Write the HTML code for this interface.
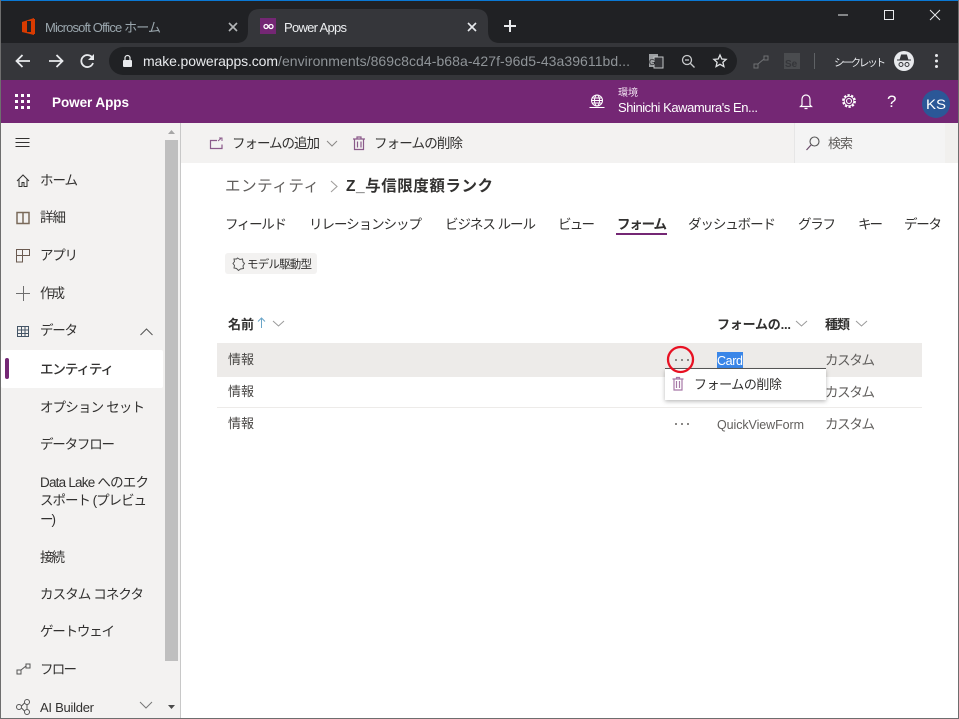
<!DOCTYPE html>
<html lang="ja"><head><meta charset="utf-8"><title>Power Apps</title>
<style>
html,body{margin:0;padding:0;background:#fff;overflow:hidden}
svg{display:block}
text{font-family:"Liberation Sans","Noto Sans CJK JP",sans-serif;white-space:pre}
.n{font-size:13.5px;fill:#323130}
.i{fill:none;stroke:#323130;stroke-width:1}
.p{fill:none;stroke:#8a5a8a;stroke-width:1.2}
</style></head><body>
<svg width="959" height="719" viewBox="0 0 959 719" xmlns="http://www.w3.org/2000/svg">
<defs><filter id="sh" x="-10%" y="-20%" width="120%" height="150%"><feDropShadow dx="0" dy="1.500" stdDeviation="2" flood-color="#000" flood-opacity=".28"/></filter></defs>
<rect width="959" height="719" fill="#fff"/>
<!-- chrome -->
<rect width="959" height="43" fill="#202124"/>
<rect width="959" height="1" fill="#0a78d4"/>
<path d="M0 43H248V21Q248 9 260 9H476Q488 9 488 21V31Q488 43 500 43H959V80H0Z" fill="#35363a"/>
<path d="M236 43Q248 43 248 31V43Z" fill="#35363a"/>
<!-- office icon -->
<path d="M22 22L34 18V35L22 32Z" fill="#d83b01"/><rect x="27" y="21" width="7" height="11" fill="#202124"/><path d="M31 19h4v15h-4z" fill="#d83b01"/>
<text x="45" y="32" font-size="13" fill="#9aa6ad" textLength="116" lengthAdjust="spacing">Microsoft Office ホーム</text>
<path d="M229 23l8 8M237 23l-8 8" stroke="#b4b6b8" stroke-width="1.6"/>
<rect x="260" y="18" width="16" height="16" fill="#742774"/>
<circle cx="266" cy="26.500" r="2" fill="none" stroke="#fff" stroke-width="1.300"/><circle cx="271" cy="26.500" r="2" fill="none" stroke="#fff" stroke-width="1.300"/>
<text x="284" y="32" font-size="13" fill="#eef0f2" textLength="63" lengthAdjust="spacing">Power Apps</text>
<path d="M468 23l8 8M476 23l-8 8" stroke="#e8eaed" stroke-width="1.600"/>
<path d="M510 20v12M504 26h12" stroke="#e8eaed" stroke-width="2"/>
<path d="M838 15h10" stroke="#e8eaed" stroke-width="1"/>
<rect x="884.500" y="10.500" width="9" height="9" fill="none" stroke="#e8eaed" stroke-width="1"/>
<path d="M930 10l10 10M940 10l-10 10" stroke="#e8eaed" stroke-width="1"/>
<!-- toolbar -->
<path d="M30 61H17M22.500 55L16.500 61L22.500 67" fill="none" stroke="#e8eaed" stroke-width="1.800"/>
<path d="M49 61H62M56.500 55L62.500 61L56.500 67" fill="none" stroke="#e8eaed" stroke-width="1.800"/>
<path d="M92.500 58A6 6 0 1 0 93 63" fill="none" stroke="#e8eaed" stroke-width="1.800"/><path d="M94 54v6h-6z" fill="#e8eaed"/>
<rect x="109" y="47" width="628" height="28" rx="14" fill="#202124"/>
<rect x="123" y="60" width="9" height="7" rx="1" fill="#e8eaed"/><path d="M125 60v-2a2.500 2.500 0 0 1 5 0v2" fill="none" stroke="#e8eaed" stroke-width="1.200"/>
<text x="143" y="66" font-size="14" fill="#e8eaed" textLength="135" lengthAdjust="spacing">make.powerapps.com</text>
<text x="278" y="66" font-size="14" fill="#8f9498" textLength="352" lengthAdjust="spacing">/environments/869c8cd4-b68a-427f-96d5-43a39611bd...</text>
<rect x="649" y="54" width="9" height="13" fill="#9da0a3"/><rect x="654" y="57" width="9" height="11" fill="#35363a" stroke="#c4c6c8"/><text x="649" y="65" font-size="8" fill="#202124">G</text>
<circle cx="687" cy="60" r="4.500" fill="none" stroke="#c8cacc" stroke-width="1.300"/><path d="M690.500 63.500l4 4M685 60h4" stroke="#c8cacc" stroke-width="1.300"/>
<path d="M720 55l1.800 4 4.300.400-3.200 2.900 1 4.300-3.900-2.300-3.900 2.300 1-4.300-3.200-2.900 4.300-.400z" fill="none" stroke="#e0e2e4" stroke-width="1.300"/>
<rect x="754" y="64" width="4" height="4" fill="none" stroke="#6e7073"/><rect x="764" y="56" width="4" height="4" fill="none" stroke="#6e7073"/><path d="M758 64l6-5" stroke="#6e7073"/>
<rect x="784" y="53" width="16" height="16" fill="#4a4c4f"/><text x="785" y="67" font-size="10" font-weight="bold" fill="#35363a">Se</text>
<rect x="814" y="53" width="1" height="16" fill="#5f6265"/>
<text x="834" y="66" font-size="10.500" fill="#e8eaed" textLength="52" lengthAdjust="spacing">シークレット</text>
<circle cx="904" cy="61" r="10" fill="#e8eaed"/><path d="M897 60h14M900 60l1.500-5h5l1.500 5" fill="#35363a" stroke="#35363a"/><circle cx="901" cy="64.500" r="2" fill="none" stroke="#35363a"/><circle cx="907" cy="64.500" r="2" fill="none" stroke="#35363a"/>
<circle cx="936.500" cy="55.500" r="1.500" fill="#e8eaed"/><circle cx="936.500" cy="61" r="1.500" fill="#e8eaed"/><circle cx="936.500" cy="66.500" r="1.500" fill="#e8eaed"/>
<!-- app bar -->
<rect y="80" width="959" height="43" fill="#742774"/>
<g fill="#fff"><rect x="15" y="94" width="3" height="3"/><rect x="21" y="94" width="3" height="3"/><rect x="27" y="94" width="3" height="3"/><rect x="15" y="100" width="3" height="3"/><rect x="21" y="100" width="3" height="3"/><rect x="27" y="100" width="3" height="3"/><rect x="15" y="106" width="3" height="3"/><rect x="21" y="106" width="3" height="3"/><rect x="27" y="106" width="3" height="3"/></g>
<text x="52" y="107" font-size="13.500" font-weight="bold" fill="#fff" textLength="77" lengthAdjust="spacing">Power Apps</text>
<g fill="none" stroke="#fff"><circle cx="597" cy="100.500" r="5.500"/><ellipse cx="597" cy="100.500" rx="2.500" ry="5.500"/><path d="M591.500 100.500h11M592 98h10M592 103h10M589.500 107.500h15"/></g>
<text x="618" y="96" font-size="10" fill="#f0e0f0" textLength="20" lengthAdjust="spacing">環境</text>
<text x="618" y="112" font-size="13" fill="#fff" textLength="140" lengthAdjust="spacing">Shinichi Kawamura's En...</text>
<path d="M802 105v-6a4 4 0 0 1 8 0v6l1.500 1.500h-11zM804.500 108.500h3" fill="none" stroke="#fff" stroke-width="1.200"/>
<circle cx="849" cy="101" r="2.500" fill="none" stroke="#fff" stroke-width="1.100"/><circle cx="849" cy="101" r="5.700" fill="none" stroke="#fff" stroke-width="2.400" stroke-dasharray="2.200 1.400"/><circle cx="849" cy="101" r="4.800" fill="none" stroke="#fff" stroke-width=".9"/>
<text x="887" y="107" font-size="17" fill="#fff">?</text>
<circle cx="936" cy="104" r="14" fill="#2b5797"/>
<text x="926" y="109" font-size="14" fill="#fff" textLength="20" lengthAdjust="spacingAndGlyphs">KS</text>
<!-- sidebar -->
<rect y="123" width="180" height="596" fill="#f3f2f1"/>
<rect x="180" y="123" width="1" height="596" fill="#c8c8c8"/>
<rect x="165" y="140" width="13" height="521" fill="#bfbfbf"/>
<path d="M168 134l3.500-4 3.500 4z" fill="#a6a6a6"/>
<path d="M168 705l3.500 4 3.500-4z" fill="#4a4a4a"/>
<path d="M15.500 138.500h14M15.500 142.500h14M15.500 146.500h14" stroke="#323130" stroke-width="1"/>
<path d="M17 181l6-6 6 6M19 179.500v7h3v-4h2v4h3v-7" class="i"/>
<text class="n" x="40" y="185" textLength="38" lengthAdjust="spacing">ホーム</text>
<path d="M17 212.500h12v11H17zM23 212.500v11" fill="none" stroke="#7a6a5a" stroke-width="1.500"/>
<text class="n" x="40" y="222" textLength="26" lengthAdjust="spacing">詳細</text>
<path d="M16.500 249.500h13v6h-13zM16.500 255.500v6.500h6v-12.500" fill="none" stroke="#6a5a50" stroke-width="1"/>
<text class="n" x="40" y="260" textLength="38" lengthAdjust="spacing">アプリ</text>
<path d="M16 293.500h14M23.500 286v15" stroke="#6e6e6e" stroke-width="1"/>
<text class="n" x="40" y="298" textLength="25" lengthAdjust="spacing">作成</text>
<path d="M17.500 326.500h11v10h-11zM17.500 330h11M17.500 333.500h11M21.500 326.500v10M25 326.500v10" fill="none" stroke="#445566" stroke-width="1"/>
<text class="n" x="40" y="335" textLength="38" lengthAdjust="spacing">データ</text>
<path d="M140.500 335l6-6 6 6" fill="none" stroke="#555"/>
<rect x="1" y="350" width="162" height="38" rx="2" fill="#fff"/>
<rect x="5" y="358" width="4" height="21" rx="2" fill="#742774"/>
<text class="n" x="40" y="374" textLength="74" lengthAdjust="spacing" font-weight="500">エンティティ</text>
<text class="n" x="40" y="412" textLength="105" lengthAdjust="spacing">オプション セット</text>
<text class="n" x="40" y="449" textLength="75" lengthAdjust="spacing">データフロー</text>
<text class="n" x="40" y="487" textLength="109" lengthAdjust="spacing">Data Lake へのエク</text>
<text class="n" x="40" y="505" textLength="107" lengthAdjust="spacing">スポート (プレビュ</text>
<text class="n" x="40" y="524" textLength="16" lengthAdjust="spacing">ー)</text>
<text class="n" x="40" y="562" textLength="25" lengthAdjust="spacing">接続</text>
<text class="n" x="40" y="599" textLength="104" lengthAdjust="spacing">カスタム コネクタ</text>
<text class="n" x="40" y="636" textLength="75" lengthAdjust="spacing">ゲートウェイ</text>
<rect x="17" y="670" width="4" height="4" fill="none" stroke="#555"/><rect x="26" y="664" width="4" height="4" fill="none" stroke="#555"/><path d="M21 670l5-4" stroke="#555"/>
<text class="n" x="40" y="674" textLength="37" lengthAdjust="spacing">フロー</text>
<g fill="none" stroke="#555"><circle cx="19" cy="707" r="2.500"/><circle cx="27" cy="702" r="2.500"/><circle cx="27" cy="712" r="2.500"/><path d="M21.500 706l3-3M21.500 708l3 3M27 704.500v5"/></g>
<text x="40" y="712" font-size="13" fill="#323130" textLength="54" lengthAdjust="spacing">AI Builder</text>
<path d="M140 702l6 6 6-6" fill="none" stroke="#777"/>
<!-- command bar -->
<rect x="181" y="123" width="778" height="40" fill="#f3f2f1"/>
<rect x="794" y="123" width="151" height="40" fill="#f4f4f4"/>
<rect x="794" y="123" width="1" height="40" fill="#e6e6e6"/>
<rect x="945" y="123" width="14" height="40" fill="#f1f0ee"/>
<path d="M217 140.500h-6.500v8h11.500v-4" class="p"/><path d="M218 141l3-2.500M219 138h3v3" fill="none" stroke="#8a5a8a"/>
<text class="n" x="232" y="148" textLength="88" lengthAdjust="spacing">フォームの追加</text>
<path d="M327 141l5 5 5-5" fill="none" stroke="#8a8886"/>
<path d="M353 139h12M357 139v-2h4v2M354.500 139v10.500h9V139M357.500 141.500v6M361 141.500v6" class="p"/>
<text class="n" x="374" y="148" textLength="89" lengthAdjust="spacing">フォームの削除</text>
<circle cx="814.500" cy="141.500" r="4.500" fill="none" stroke="#555" stroke-width="1.100"/><path d="M811 145l-4.500 5" stroke="#6a4a6a" stroke-width="1.200"/>
<text x="828" y="148" font-size="13" fill="#605e5c" textLength="25" lengthAdjust="spacing">検索</text>
<!-- breadcrumb -->
<text x="225" y="191" font-size="15.500" fill="#605e5c" textLength="94" lengthAdjust="spacing">エンティティ</text>
<path d="M331 181l6 5.500-6 5.500" fill="none" stroke="#a19f9d" stroke-width="1.100"/>
<text x="346" y="191" font-size="15.500" font-weight="bold" fill="#323130" textLength="147" lengthAdjust="spacing">Z_与信限度額ランク</text>
<!-- tabs -->
<g font-size="13.500" fill="#323130">
<text x="225" y="229" textLength="62" lengthAdjust="spacing">フィールド</text>
<text x="309" y="229" textLength="113" lengthAdjust="spacing">リレーションシップ</text>
<text x="445" y="229" textLength="91" lengthAdjust="spacing">ビジネス ルール</text>
<text x="558" y="229" textLength="37" lengthAdjust="spacing">ビュー</text>
<text x="617" y="229" textLength="50" lengthAdjust="spacing" font-weight="bold">フォーム</text>
<text x="688" y="229" textLength="88" lengthAdjust="spacing">ダッシュボード</text>
<text x="798" y="229" textLength="38" lengthAdjust="spacing">グラフ</text>
<text x="858" y="229" textLength="25" lengthAdjust="spacing">キー</text>
<text x="904" y="229" textLength="38" lengthAdjust="spacing">データ</text>
</g>
<rect x="616" y="233" width="51" height="2" fill="#742774"/>
<!-- pill -->
<rect x="225" y="253" width="92" height="21" rx="3" fill="#f3f2f1"/>
<path d="M237.500 258l2.500 1.500 2.500-.5.500 3 1.500 1.500-1.500 2.500.5 2.500-3 .5-2 1.500-2-2-2.500-.5.500-2.500-1.500-2 1.500-2-.5-2.500 2.500 0z" fill="none" stroke="#555" stroke-width="1"/>
<text x="247" y="268" font-size="11.500" fill="#323130" textLength="65" lengthAdjust="spacing">モデル駆動型</text>
<!-- table header -->
<text x="228" y="329" font-size="13" font-weight="bold" fill="#323130" textLength="26" lengthAdjust="spacing">名前</text>
<path d="M261.500 328v-10M258 321.500l3.500-3.500 3.500 3.500" fill="none" stroke="#6aa5c8"/>
<path d="M273 321l5.500 5 5.500-5" fill="none" stroke="#9a9a9a"/>
<text x="717" y="329" font-size="13" font-weight="bold" fill="#323130" textLength="74" lengthAdjust="spacing">フォームの...</text>
<path d="M796 321l5.500 5 5.500-5" fill="none" stroke="#9a9a9a"/>
<text x="825" y="329" font-size="13" font-weight="bold" fill="#323130" textLength="25" lengthAdjust="spacing">種類</text>
<path d="M856 321l5.500 5 5.500-5" fill="none" stroke="#9a9a9a"/>
<!-- rows -->
<rect x="217" y="343" width="705" height="34" fill="#edebe9"/>
<rect x="217" y="407" width="705" height="1" fill="#edebe9"/>
<text x="228" y="364" font-size="13" fill="#484644" textLength="26" lengthAdjust="spacing">情報</text>
<text x="228" y="396" font-size="13" fill="#484644" textLength="26" lengthAdjust="spacing">情報</text>
<text x="228" y="428" font-size="13" fill="#484644" textLength="26" lengthAdjust="spacing">情報</text>
<rect x="717" y="352" width="26" height="16" fill="#3a86e8"/>
<text x="717" y="365" font-size="12.500" fill="#fff" textLength="26" lengthAdjust="spacing">Card</text>
<text x="717" y="429" font-size="12.500" fill="#605e5c" textLength="87" lengthAdjust="spacing">QuickViewForm</text>
<text x="825" y="365" font-size="13.500" fill="#605e5c" textLength="50" lengthAdjust="spacing">カスタム</text>
<text x="825" y="397" font-size="13.500" fill="#605e5c" textLength="50" lengthAdjust="spacing">カスタム</text>
<text x="825" y="429" font-size="13.500" fill="#605e5c" textLength="50" lengthAdjust="spacing">カスタム</text>
<g fill="#8a8886"><rect x="675" y="359" width="2" height="2"/><rect x="681" y="359" width="2" height="2"/><rect x="687" y="359" width="2" height="2"/><rect x="675" y="423" width="2" height="2"/><rect x="681" y="423" width="2" height="2"/><rect x="687" y="423" width="2" height="2"/></g>
<!-- popup -->
<rect x="665" y="369" width="161" height="31" fill="#fff" filter="url(#sh)"/>
<path d="M665 368.500h161" stroke="#555" stroke-width="1"/>
<path d="M672.500 379h11M676.500 379v-1.500h3v1.500M674 379v11h8v-11M676.500 381v7M679.500 381v7" fill="none" stroke="#a678a6" stroke-width="1.200"/>
<text x="694" y="389" font-size="13" fill="#323130" textLength="88" lengthAdjust="spacing">フォームの削除</text>
<circle cx="680.500" cy="359.500" r="12.500" fill="none" stroke="#e81123" stroke-width="2.300"/>
<!-- frame -->
<rect x="0" y="0" width="1" height="719" fill="#6e6e6e"/>
<rect x="958" y="0" width="1" height="719" fill="#6e6e6e"/>
<rect x="0" y="718" width="959" height="1" fill="#6e6e6e"/>
</svg>
</body></html>
